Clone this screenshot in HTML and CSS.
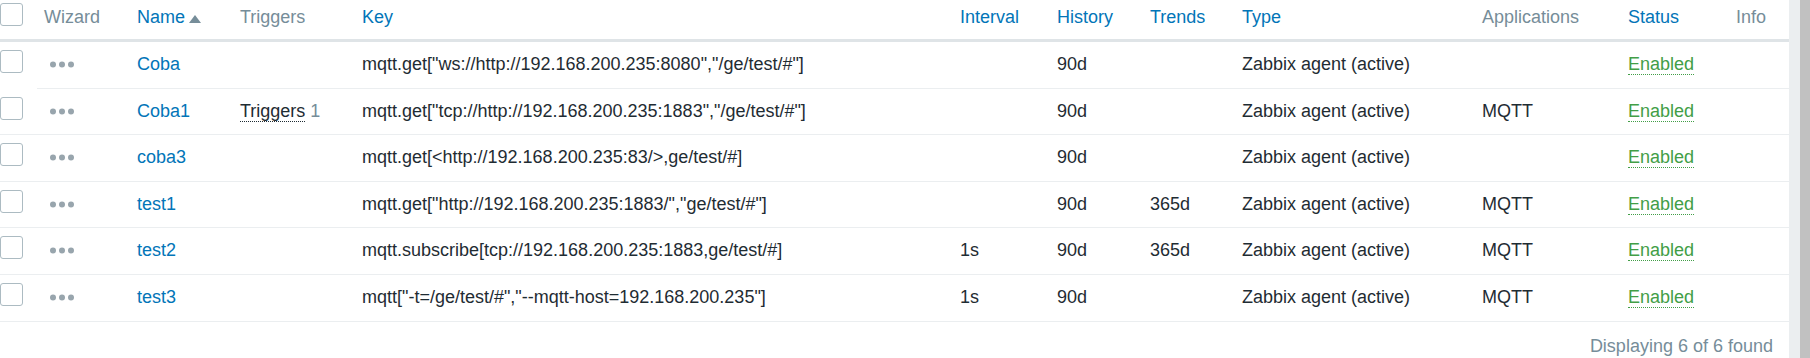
FILE: index.html
```html
<!DOCTYPE html>
<html>
<head>
    <title>Items</title>
    <link rel="stylesheet" href="styles.css">
</head>
<body>
<div class="page">
    <table class="list-table">
        <thead>
        <tr>
            <th class="col-check"><span class="checkbox"></span></th>
            <th class="col-wizard">Wizard</th>
            <th class="col-name"><a class="sort-link">Name</a><span class="arrow-up"></span></th>
            <th class="col-triggers">Triggers</th>
            <th class="col-key"><a class="sort-link">Key</a></th>
            <th class="col-interval"><a class="sort-link">Interval</a></th>
            <th class="col-history"><a class="sort-link">History</a></th>
            <th class="col-trends"><a class="sort-link">Trends</a></th>
            <th class="col-type"><a class="sort-link">Type</a></th>
            <th class="col-apps">Applications</th>
            <th class="col-status"><a class="sort-link">Status</a></th>
            <th class="col-info">Info</th>
        </tr>
        </thead>
        <tbody>
        <tr>
            <td class="cell-check no-line"><span class="checkbox"></span></td>
            <td><svg class="dots" width="24" height="7" viewBox="0 0 24 7"><circle cx="3" cy="3.5" r="3"/><circle cx="12" cy="3.5" r="3"/><circle cx="21" cy="3.5" r="3"/></svg></td>
            <td><a class="link">Coba</a></td>
            <td></td>
            <td>mqtt.get["ws://http://192.168.200.235:8080","/ge/test/#"]</td>
            <td></td>
            <td>90d</td>
            <td></td>
            <td>Zabbix agent (active)</td>
            <td></td>
            <td><a class="status-on">Enabled</a></td>
            <td></td>
        </tr>
        <tr>
            <td class="cell-check"><span class="checkbox"></span></td>
            <td><svg class="dots" width="24" height="7" viewBox="0 0 24 7"><circle cx="3" cy="3.5" r="3"/><circle cx="12" cy="3.5" r="3"/><circle cx="21" cy="3.5" r="3"/></svg></td>
            <td><a class="link">Coba1</a></td>
            <td><a class="link-alt">Triggers</a><span class="grey"> 1</span></td>
            <td>mqtt.get["tcp://http://192.168.200.235:1883","/ge/test/#"]</td>
            <td></td>
            <td>90d</td>
            <td></td>
            <td>Zabbix agent (active)</td>
            <td>MQTT</td>
            <td><a class="status-on">Enabled</a></td>
            <td></td>
        </tr>
        <tr>
            <td class="cell-check"><span class="checkbox"></span></td>
            <td><svg class="dots" width="24" height="7" viewBox="0 0 24 7"><circle cx="3" cy="3.5" r="3"/><circle cx="12" cy="3.5" r="3"/><circle cx="21" cy="3.5" r="3"/></svg></td>
            <td><a class="link">coba3</a></td>
            <td></td>
            <td>mqtt.get[&lt;http://192.168.200.235:83/&gt;,ge/test/#]</td>
            <td></td>
            <td>90d</td>
            <td></td>
            <td>Zabbix agent (active)</td>
            <td></td>
            <td><a class="status-on">Enabled</a></td>
            <td></td>
        </tr>
        <tr>
            <td class="cell-check"><span class="checkbox"></span></td>
            <td><svg class="dots" width="24" height="7" viewBox="0 0 24 7"><circle cx="3" cy="3.5" r="3"/><circle cx="12" cy="3.5" r="3"/><circle cx="21" cy="3.5" r="3"/></svg></td>
            <td><a class="link">test1</a></td>
            <td></td>
            <td>mqtt.get["http://192.168.200.235:1883/","ge/test/#"]</td>
            <td></td>
            <td>90d</td>
            <td>365d</td>
            <td>Zabbix agent (active)</td>
            <td>MQTT</td>
            <td><a class="status-on">Enabled</a></td>
            <td></td>
        </tr>
        <tr>
            <td class="cell-check"><span class="checkbox"></span></td>
            <td><svg class="dots" width="24" height="7" viewBox="0 0 24 7"><circle cx="3" cy="3.5" r="3"/><circle cx="12" cy="3.5" r="3"/><circle cx="21" cy="3.5" r="3"/></svg></td>
            <td><a class="link">test2</a></td>
            <td></td>
            <td>mqtt.subscribe[tcp://192.168.200.235:1883,ge/test/#]</td>
            <td>1s</td>
            <td>90d</td>
            <td>365d</td>
            <td>Zabbix agent (active)</td>
            <td>MQTT</td>
            <td><a class="status-on">Enabled</a></td>
            <td></td>
        </tr>
        <tr>
            <td class="cell-check"><span class="checkbox"></span></td>
            <td><svg class="dots" width="24" height="7" viewBox="0 0 24 7"><circle cx="3" cy="3.5" r="3"/><circle cx="12" cy="3.5" r="3"/><circle cx="21" cy="3.5" r="3"/></svg></td>
            <td><a class="link">test3</a></td>
            <td></td>
            <td>mqtt["-t=/ge/test/#","--mqtt-host=192.168.200.235"]</td>
            <td>1s</td>
            <td>90d</td>
            <td></td>
            <td>Zabbix agent (active)</td>
            <td>MQTT</td>
            <td><a class="status-on">Enabled</a></td>
            <td></td>
        </tr>
        </tbody>
    </table>
    <div class="table-stats">Displaying 6 of 6 found</div>
</div>
<div class="gutter"></div>
<div class="scrollbar"></div>
</body>
</html>
```

FILE: styles.css
```css
* {
    box-sizing: border-box;
}
body {
    font-family: "Liberation Sans", Arial, sans-serif;
    font-size: 18px;
    color: #1f2c33;
    background-color: white;
    display: flex;
    height: 100vh;
    margin: 0;
    overflow: hidden;
}
.page {
    flex: none;
    width: 1789px;
}
.gutter {
    flex: none;
    width: 11px;
    background-color: #ebeef0;
}
.scrollbar {
    flex: none;
    width: 10px;
    background-color: #c1c1c1;
}
.list-table {
    width: 1789px;
    table-layout: fixed;
    border-collapse: separate;
    border-spacing: 0;
}
.list-table th {
    text-align: left;
    font-weight: normal;
    color: #768d99;
    line-height: 20px;
    padding: 7px 0 12px 7px;
    border-bottom: 3px solid #dfe4e7;
    vertical-align: top;
    white-space: nowrap;
}
.list-table td {
    line-height: 20px;
    padding: 12px 0 13.6px 7px;
    border-bottom: 1px solid #ebeef0;
    vertical-align: top;
    white-space: nowrap;
}
.list-table th.col-check,
.list-table td.cell-check {
    padding: 0;
}
.list-table td.no-line {
    border-bottom-color: transparent;
}
.col-check { width: 37px; }
.col-wizard { width: 93px; }
.col-name { width: 103px; }
.col-triggers { width: 122px; }
.col-key { width: 598px; }
.col-interval { width: 97px; }
.col-history { width: 93px; }
.col-trends { width: 92px; }
.col-type { width: 240px; }
.col-apps { width: 146px; }
.col-status { width: 108px; }
.col-info { width: 60px; }
.checkbox {
    display: block;
    width: 23px;
    height: 23px;
    margin-top: 8px;
    border: 1px solid #acbbc2;
    border-radius: 3px;
    background: white;
}
th .checkbox {
    margin-top: 3px;
}
.dots {
    display: block;
    margin: 7px 0 0 6px;
    fill: #98a5ad;
}
.sort-link,
.link {
    color: #0275b8;
}
.arrow-up {
    display: inline-block;
    margin-left: 4px;
    width: 0;
    height: 0;
    border-left: 6px solid transparent;
    border-right: 6px solid transparent;
    border-bottom: 8px solid #768d99;
}
.link-alt {
    color: #1f2c33;
    border-bottom: 1px dotted #1f2c33;
}
.grey {
    color: #768d99;
}
.status-on {
    color: #429e47;
    border-bottom: 1px dotted #429e47;
}
.table-stats {
    text-align: right;
    color: #768d99;
    line-height: 20px;
    padding: 14px 16px 0 0;
}
```
